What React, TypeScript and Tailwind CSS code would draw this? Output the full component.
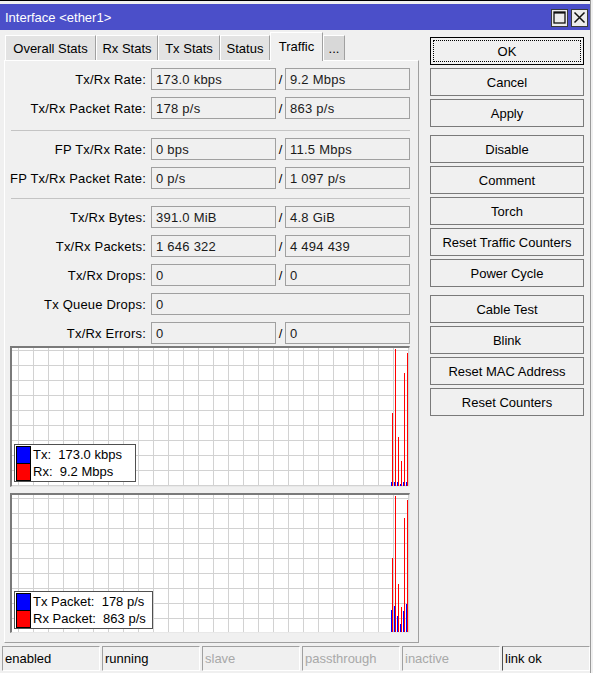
import React from "react";

type FieldProps = { w: string; children?: React.ReactNode };
const Field = ({ w, children }: FieldProps) => (
  <div className={`h-[22px] ${w} border border-[#a0a0a0] flex items-center pl-[4px] text-[#1a1a1a] whitespace-nowrap tracking-[0.25px]`}>
    {children}
  </div>
);

type RowProps = { label: string; a: string; b?: string; wide?: boolean };
const Row = ({ label, a, b, wide }: RowProps) => (
  <div className="flex items-center h-[22px]">
    <div className="w-[146px] text-right pr-[5px] whitespace-nowrap tracking-[0.2px]">{label}</div>
    {wide ? (
      <Field w="w-[259px]">{a}</Field>
    ) : (
      <>
        <Field w="w-[125px]">{a}</Field>
        <div className="w-[9px] text-center">/</div>
        <Field w="w-[125px]">{b}</Field>
      </>
    )}
  </div>
);

type Bar = [number, number];
type ChartProps = {
  outer: string;
  innerH: number;
  gy: number;
  red: Bar[];
  blue: Bar[];
  legendTop: string;
  legendW: string;
  rows: [string, string][];
};

const Chart = ({ outer, innerH, gy, red, blue, legendTop, legendW, rows }: ChartProps) => {
  const W = 397;
  const vs: number[] = [];
  for (let x = 6; x < W; x += 15) vs.push(x);
  const hs: number[] = [];
  for (let y = gy; y < innerH; y += 15) hs.push(y);
  return (
    <div
      className={`ml-[5px] w-[400px] ${outer} relative bg-white border-t-2 border-l-2 border-r border-b border-t-[#7a7a7a] border-l-[#7a7a7a] border-r-[#e8e8e8] border-b-[#e8e8e8]`}
    >
      <svg width={W} height={innerH} className="block">
        {vs.map((x) => (
          <rect key={"v" + x} x={x} y={0} width={1} height={innerH} fill="#d2d2d2" />
        ))}
        {hs.map((y) => (
          <rect key={"h" + y} x={0} y={y} width={W} height={1} fill="#d2d2d2" />
        ))}
        {blue.map(([x, t]) => (
          <rect key={"b" + x} x={x} y={t} width={1.4} height={innerH - t} fill="#0000ff" />
        ))}
        {red.map(([x, t]) => (
          <rect key={"r" + x} x={x} y={t} width={1} height={innerH - t} fill="#ff0000" />
        ))}
      </svg>
      <div
        className={`absolute left-[2px] ${legendTop} ${legendW} h-[38px] border border-[#505050] bg-white flex items-center pl-[1px]`}
      >
        <div className="w-[15px] border border-black flex flex-col">
          <div className="h-[16px] bg-[#0000ff]" />
          <div className="h-px bg-black" />
          <div className="h-[16px] bg-[#ff0000]" />
        </div>
        <div className="ml-[2px] flex flex-col text-[13px] leading-[17px] text-black">
          {rows.map(([k, v]) => (
            <div key={k} className="whitespace-pre">
              {k}
              {"  "}
              {v}
            </div>
          ))}
        </div>
      </div>
    </div>
  );
};

const Btn = ({ children, focus }: { children: React.ReactNode; focus?: boolean }) => (
  <div
    className={`relative h-[28px] w-[154px] flex items-center justify-center bg-[#f0f0f0] border ${
      focus ? "border-black" : "border-[#7a7a7a]"
    }`}
  >
    {focus && <div className="absolute inset-[2px] border border-dotted border-black" />}
    <span className="relative">{children}</span>
  </div>
);

const tabs: { label: string; w: string; sel?: boolean; dim?: boolean }[] = [
  { label: "Overall Stats", w: "w-[91px]" },
  { label: "Rx Stats", w: "w-[62px]" },
  { label: "Tx Stats", w: "w-[62px]" },
  { label: "Status", w: "w-[50px]" },
  { label: "Traffic", w: "w-[53px]", sel: true },
  { label: "...", w: "w-[22px]", dim: true },
];

export default function App() {
  return (
    <div className="w-[593px] h-[673px] bg-[#f0f0f0] overflow-hidden font-[family-name:'Liberation_Sans',Arial,sans-serif] text-[13px] leading-none text-black">
      <div className="w-[591px] h-full border-r border-[#9a9a9a] flex flex-col">
        <div className="h-px bg-black" />
        <div className="h-[3px]" />
        {/* title bar */}
        <div className="h-[26px] bg-[#4b4fc9] flex items-center pl-[5px] pr-[2px]">
          <div className="text-white text-[13px] flex-1">Interface &lt;ether1&gt;</div>
          <div className="flex gap-[3px] mt-[1px]">
            <div className="w-[17px] h-[18px] bg-[#ececec] border border-[#3a3a3a] flex items-center justify-center">
              <svg width="13" height="13" viewBox="0 0 13 13">
                <rect x="1" y="1" width="11" height="11" fill="none" stroke="#111" strokeWidth="1.3" />
                <rect x="1" y="1" width="11" height="1.6" fill="#111" />
              </svg>
            </div>
            <div className="w-[17px] h-[18px] bg-[#ececec] border border-[#3a3a3a] flex items-center justify-center">
              <svg width="13" height="13" viewBox="0 0 13 13">
                <path d="M1.5 1.5 L11.5 11.5 M11.5 1.5 L1.5 11.5" stroke="#111" strokeWidth="1.5" />
              </svg>
            </div>
          </div>
        </div>
        {/* main */}
        <div className="h-[613px] flex">
          <div className="ml-[4px] w-[415px] flex flex-col">
            <div className="h-[30px] flex items-end pl-[1px]">
              {tabs.map((t) =>
                t.sel ? (
                  <div
                    key={t.label}
                    className={`${t.w} h-[29px] -mb-px relative z-10 bg-[#f0f0f0] border-l border-t border-r border-l-white border-t-white border-r-[#a0a0a0] flex items-center justify-center pb-[2px]`}
                  >
                    {t.label}
                  </div>
                ) : (
                  <div
                    key={t.label}
                    className={`${t.w} h-[25px] ${
                      t.dim ? "bg-[#d8d8d8]" : "bg-[#e3e3e3]"
                    } border-l border-t border-r border-l-white border-t-white border-r-[#a0a0a0] flex items-center justify-center`}
                  >
                    {t.label}
                  </div>
                )
              )}
            </div>
            <div className="h-[583px] border border-t-white border-l-white border-r-[#a0a0a0] border-b-[#a0a0a0] flex flex-col pt-[7px]">
              <div className="flex flex-col gap-[7px]">
                <Row label="Tx/Rx Rate:" a="173.0 kbps" b="9.2 Mbps" />
                <Row label="Tx/Rx Packet Rate:" a="178 p/s" b="863 p/s" />
              </div>
              <div className="ml-[6px] w-[399px] h-px bg-[#c4c4c4] mt-[11px] mb-[7px]" />
              <div className="flex flex-col gap-[7px]">
                <Row label="FP Tx/Rx Rate:" a="0 bps" b="11.5 Mbps" />
                <Row label="FP Tx/Rx Packet Rate:" a="0 p/s" b="1 097 p/s" />
              </div>
              <div className="ml-[6px] w-[399px] h-px bg-[#c4c4c4] mt-[9px] mb-[7px]" />
              <div className="flex flex-col gap-[7px]">
                <Row label="Tx/Rx Bytes:" a="391.0 MiB" b="4.8 GiB" />
                <Row label="Tx/Rx Packets:" a="1 646 322" b="4 494 439" />
                <Row label="Tx/Rx Drops:" a="0" b="0" />
                <Row label="Tx Queue Drops:" a="0" wide />
                <Row label="Tx/Rx Errors:" a="0" b="0" />
              </div>
              <div className="mt-[2px]">
                <Chart
                  outer="h-[141px]"
                  innerH={138}
                  gy={2}
                  red={[
                    [380, 65],
                    [383, 1],
                    [386, 89],
                    [389, 113],
                    [392, 25],
                    [395, 5],
                  ]}
                  blue={[
                    [379, 134],
                    [382, 134],
                    [385, 134],
                    [388, 136],
                    [391, 134],
                    [394, 134],
                  ]}
                  legendTop="top-[96px]"
                  legendW="w-[122px]"
                  rows={[
                    ["Tx:", "173.0 kbps"],
                    ["Rx:", "9.2 Mbps"],
                  ]}
                />
              </div>
              <div className="mt-[6px]">
                <Chart
                  outer="h-[140px]"
                  innerH={137}
                  gy={3}
                  red={[
                    [380, 63],
                    [383, 1],
                    [386, 89],
                    [389, 112],
                    [392, 23],
                    [395, 5],
                  ]}
                  blue={[
                    [379, 115],
                    [382, 111],
                    [385, 121],
                    [388, 129],
                    [391, 116],
                    [394, 109],
                  ]}
                  legendTop="top-[96px]"
                  legendW="w-[139px]"
                  rows={[
                    ["Tx Packet:", "178 p/s"],
                    ["Rx Packet:", "863 p/s"],
                  ]}
                />
              </div>
            </div>
          </div>
          <div className="ml-[11px] pt-[7px] flex flex-col">
            <div className="flex flex-col gap-[3px]">
              <Btn focus>OK</Btn>
              <Btn>Cancel</Btn>
              <Btn>Apply</Btn>
            </div>
            <div className="flex flex-col gap-[3px] mt-[8px]">
              <Btn>Disable</Btn>
              <Btn>Comment</Btn>
              <Btn>Torch</Btn>
              <Btn>Reset Traffic Counters</Btn>
              <Btn>Power Cycle</Btn>
            </div>
            <div className="flex flex-col gap-[3px] mt-[8px]">
              <Btn>Cable Test</Btn>
              <Btn>Blink</Btn>
              <Btn>Reset MAC Address</Btn>
              <Btn>Reset Counters</Btn>
            </div>
          </div>
        </div>
        {/* status bar */}
        <div className="mt-[3px] h-[25px] flex gap-[2px] pl-[2px]">
          {[
            { t: "enabled", w: "w-[98px]", c: "text-black" },
            { t: "running", w: "w-[98px]", c: "text-black" },
            { t: "slave", w: "w-[98px]", c: "text-[#a8a8a8]" },
            { t: "passthrough", w: "w-[98px]", c: "text-[#a8a8a8]" },
            { t: "inactive", w: "w-[98px]", c: "text-[#a8a8a8]" },
          ].map((s) => (
            <div
              key={s.t}
              className={`${s.w} h-full border border-t-[#a0a0a0] border-l-[#a0a0a0] border-r-white border-b-white flex items-center pl-[2px] ${s.c}`}
            >
              {s.t}
            </div>
          ))}
          <div className="w-[88px] h-full border border-t-[#a0a0a0] border-l-[#505050] border-r-white border-b-white flex items-center pl-[2px] text-black">
            link ok
          </div>
        </div>
      </div>
    </div>
  );
}
